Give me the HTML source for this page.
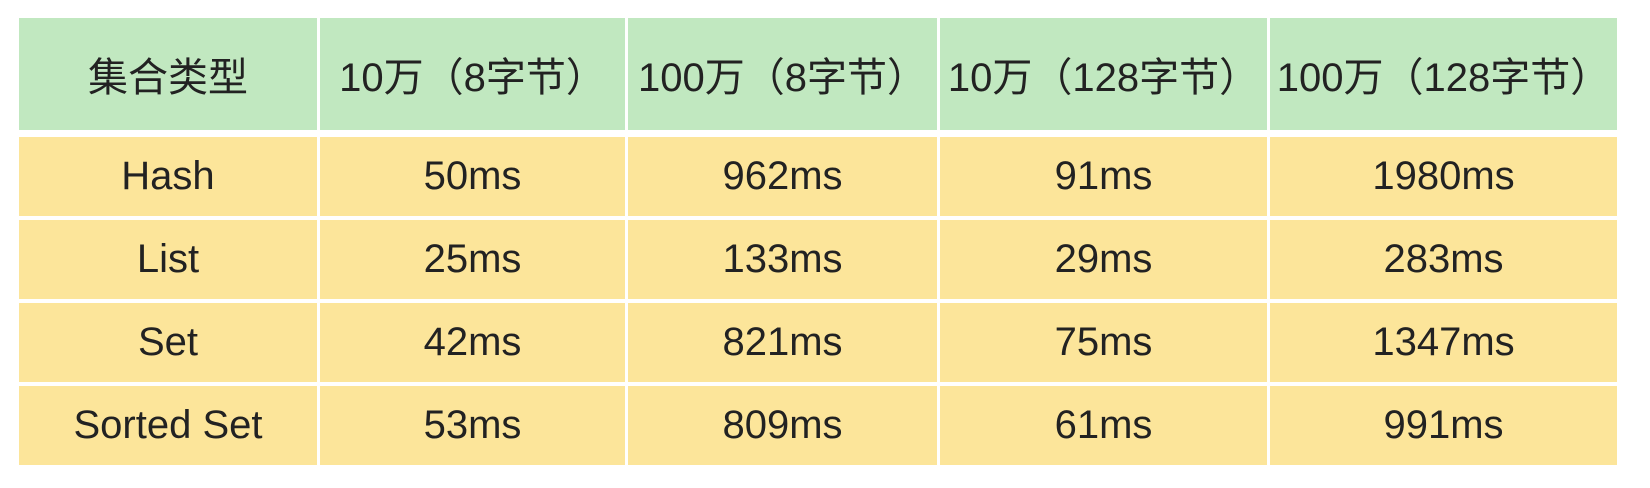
<!DOCTYPE html>
<html><head><meta charset="utf-8"><style>
body{margin:0;background:#fff;width:1650px;height:488px;overflow:hidden;font-family:"Liberation Sans","Noto Sans CJK SC",sans-serif;}
table{position:absolute;left:19px;top:18px;border-collapse:separate;border-spacing:3px 4px;margin:-4px -3px;}
td{text-align:center;color:#222;font-size:40px;padding:0;white-space:nowrap;}
tr.h td{background:#c1e8c0;height:112px;font-size:40px;}
tr.d td{background:#fce59a;height:79px;}
tr.h + tr td{border-top:3px solid #fff;}
</style></head><body>
<table>
<colgroup><col style="width:298px"><col style="width:305px"><col style="width:309px"><col style="width:327px"><col style="width:347px"></colgroup>
<tr class="h"><td>集合类型</td><td>10万（8字节）</td><td>100万（8字节）</td><td>10万（128字节）</td><td>100万（128字节）</td></tr>
<tr class="d"><td>Hash</td><td>50ms</td><td>962ms</td><td>91ms</td><td>1980ms</td></tr>
<tr class="d"><td>List</td><td>25ms</td><td>133ms</td><td>29ms</td><td>283ms</td></tr>
<tr class="d"><td>Set</td><td>42ms</td><td>821ms</td><td>75ms</td><td>1347ms</td></tr>
<tr class="d"><td>Sorted Set</td><td>53ms</td><td>809ms</td><td>61ms</td><td>991ms</td></tr>
</table>
</body></html>
